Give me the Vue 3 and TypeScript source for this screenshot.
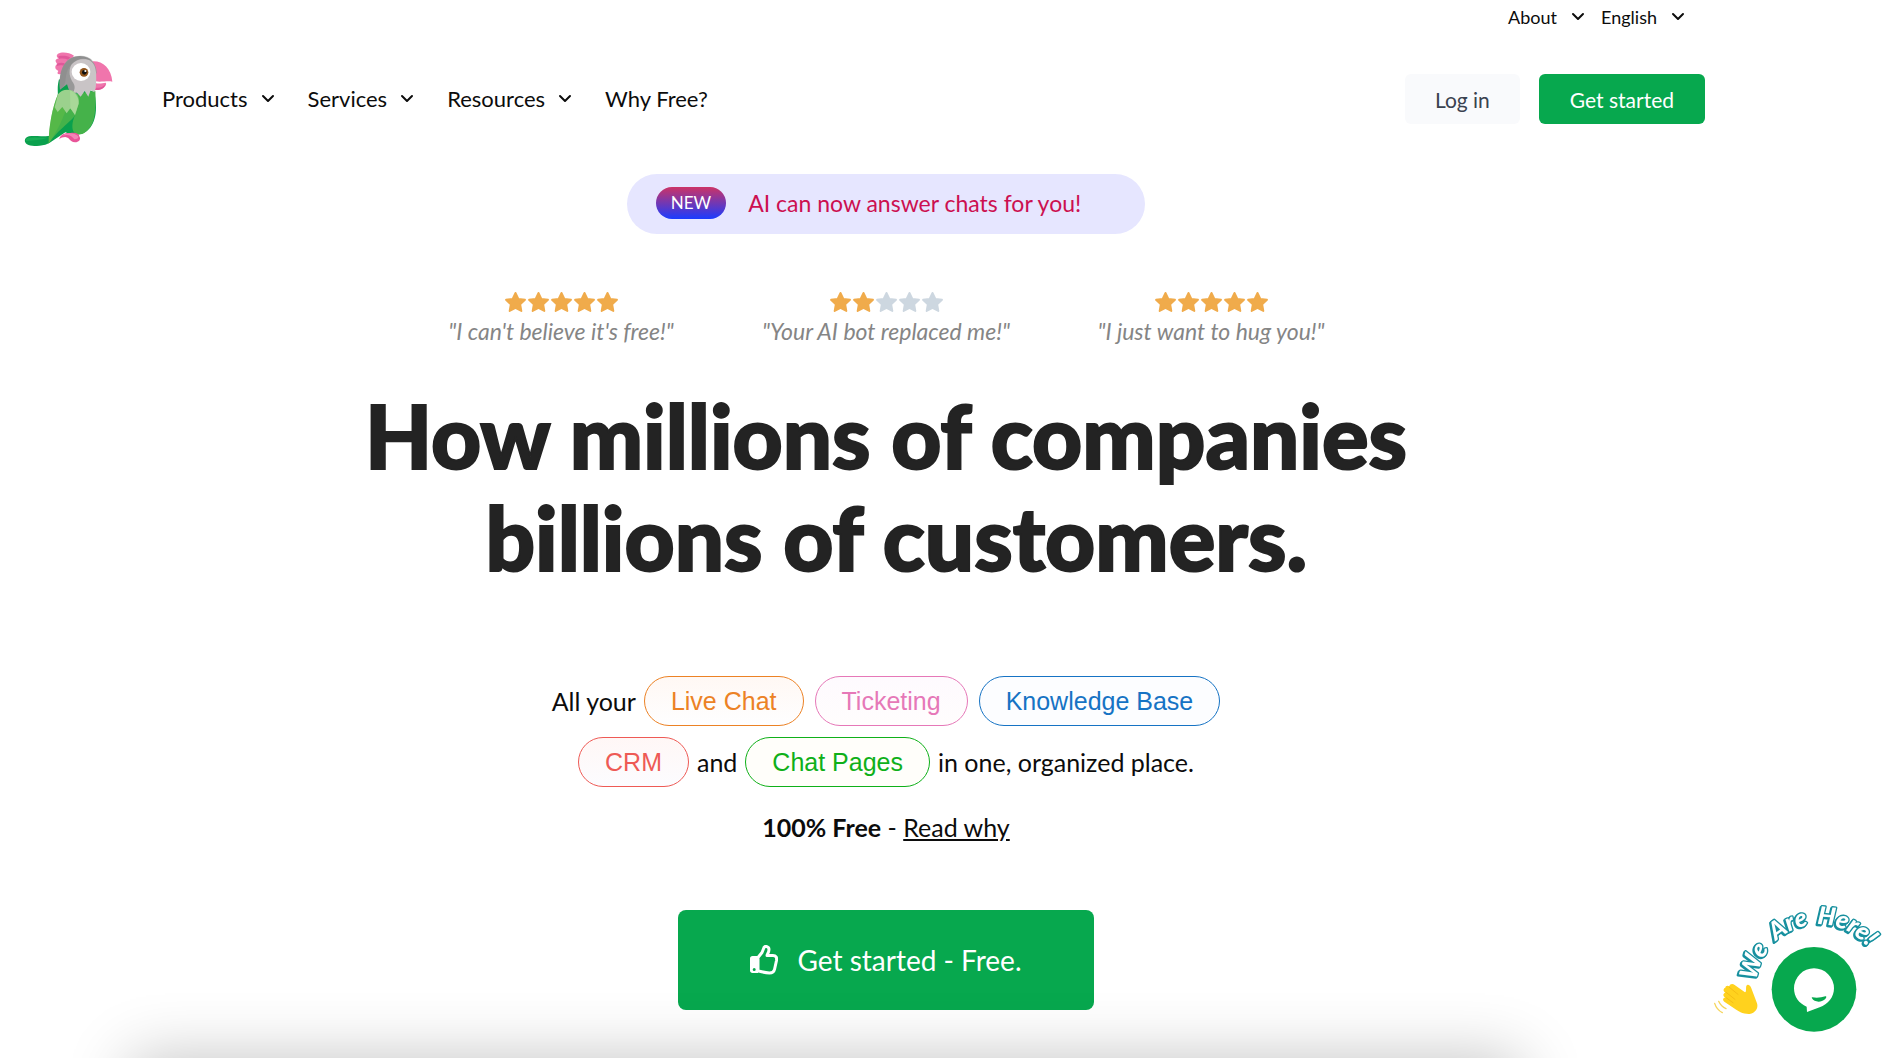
<script setup lang="ts">
const menus: string[] = ['Products', 'Services', 'Resources']
const utilities: string[] = ['About', 'English']

interface Review {
  stars: number
  quote: string
}
const reviews: Review[] = [
  { stars: 5, quote: '"I can\'t believe it\'s free!"' },
  { stars: 2, quote: '"Your AI bot replaced me!"' },
  { stars: 5, quote: '"I just want to hug you!"' },
]
</script>

<template>
  <div class="page">
    <div class="topbar">
      <button v-for="item in utilities" :key="item" type="button" class="menu small">
        {{ item }}
        <svg class="chevron" viewBox="0 0 14 10" aria-hidden="true"><path d="M2 2l5 5 5-5" /></svg>
      </button>
    </div>

    <header class="header">
      <a href="#" class="logo" aria-label="Home">
        <svg viewBox="72 60 270 288" aria-hidden="true">
          <path fill="#f075ac" d="M222 74C208 64 186 62 174 68c-7 5-3 13 4 14-10 1-14 6-9 13 2 4 6 5 6 5-9 1-11 8-7 15l7 5c-6 8 0 13 9 8z" />
          <path fill="#e0589a" d="M175 76c15-3 28-1 36 4l-7 6c-9-4-19-4-27-2zM170 98c10-4 20-4 26 0l-6 6c-7-2-14-1-19 1z" />
          <path fill="#f075ac" d="M277 91c30-2 57 20 60 61-12-4-32 2-50-1zM286 156c12 4 22 0 31-1 6 4-6 24-32 22z" />
          <path fill="#e0589a" d="M289 170c12 2 22-4 27-11-2 11-12 20-31 18z" />
          <path fill="#0aa04d" d="M177 145c-5 18-4 36-3 50l-22 119c-26 3-50 0-65 2-15 4-16 17-6 24 12 8 34 5 55 1l12-5 48-32c52 22 92-9 92-75 0-30-6-47-6-47z" />
          <path fill="#45b24a" d="M222 190l64-11c3 68-2 110-37 129-35 12-38-24-24-55z" />
          <path fill="#989898" d="M180 176c-6-63 17-101 60-101 33 1 49 23 50 51l-55 60-24 4-10-30z" />
          <path fill="#c9c4c6" d="M215 100c20-25 70-25 73 24 2 31-1 48-5 60l-11-6-7 19-11-17-12 17-14-15-10 13c4-22 12-25-2-45-10-17-9-36-1-50z" />
          <path fill="#858585" d="M205 88c20-17 54-20 74 1-25-7-49-7-67 14-23 29-8 48-24 66l-8 5c-3-43 5-69 25-86z" opacity=".45" />
          <ellipse cx="243" cy="123" rx="28" ry="27" fill="#fff" />
          <circle cx="252" cy="124" r="13" fill="#91551d" />
          <circle cx="253" cy="124" r="7" fill="#111" />
          <circle cx="256" cy="120" r="3" fill="#fff" />
          <path fill="#45b24a" d="M174 190c26-27 69-9 63 35-5 42-54 57-91 113 0-48 11-111 28-148z" />
          <path fill="#65bd45" d="M211 178c-8 63-33 112-65 160 0-48 11-111 28-148 9-9 22-14 37-12z" opacity=".5" />
          <path fill="#9bd18d" d="M174 190c24-29 64-9 62 28l-11 34-14-20-11 15-13-19-14 15-9-14z" />
          <path fill="#b7dfa6" d="M210 177c20 2 30 22 26 41l-11 34-14-20z" opacity=".45" />
          <path fill="#e85498" d="M177 325c5-15 17-21 34-19 15-3 26 1 27 10 7 12-5 19-13 18-18-2-14-14-29-16-8 0-13 2-19 7z" />
          <path fill="#f384b7" d="M187 314c14-11 37-8 48 2 1 7-4 9-12 9-6-11-20-17-36-11z" />
          <path fill="#19ae57" d="M82 321c22-4 42 0 61-1-19 7-42 8-62 10-5 0-5-6 1-9z" />
        </svg>
      </a>
      <nav class="nav" aria-label="Main">
        <button v-for="item in menus" :key="item" type="button" class="menu">
          {{ item }}
          <svg class="chevron" viewBox="0 0 14 10" aria-hidden="true"><path d="M2 2l5 5 5-5" /></svg>
        </button>
        <a href="#" class="menu">Why Free?</a>
      </nav>
      <div class="actions">
        <button type="button" class="login">Log in</button>
        <button type="button" class="signup">Get started</button>
      </div>
    </header>

    <main class="hero">
      <a href="#" class="banner">
        <span class="badge">NEW</span>
        <span>AI can now answer chats for you!</span>
      </a>

      <div class="reviews">
        <figure v-for="review in reviews" :key="review.quote" class="review">
          <div class="stars" role="img" :aria-label="review.stars + ' out of 5 stars'">
            <svg v-for="n in 5" :key="n" viewBox="0 0 24 24" :class="{ off: n > review.stars }" aria-hidden="true">
              <path d="M12 2l3 6.200 6.900 1-5 4.800 1.200 6.900L12 17.600l-6.100 3.300 1.200-6.900-5-4.800 6.900-1z" />
            </svg>
          </div>
          <figcaption>{{ review.quote }}</figcaption>
        </figure>
      </div>

      <h1>How millions of companies<br />&nbsp;billions of customers.</h1>

      <div class="products">
        <div class="line">
          <span>All your</span>
          <a href="#" class="pill chat">Live Chat</a>
          <a href="#" class="pill ticketing">Ticketing</a>
          <a href="#" class="pill knowledge">Knowledge Base</a>
        </div>
        <div class="line">
          <a href="#" class="pill crm">CRM</a>
          <span>and</span>
          <a href="#" class="pill pages">Chat Pages</a>
          <span>in one, organized place.</span>
        </div>
      </div>

      <p class="free"><strong>100% Free</strong> - <a href="#">Read why</a></p>

      <button type="button" class="cta">
        <svg viewBox="0 0 28 30" aria-hidden="true">
          <path class="outline" d="M8 12.500l4-5 2-5c1-2 5-1 5 2 0 3-2 5-2 6h6c3 0 4 2 3.500 5l-2 9c-.6 2.500-2 3.500-5 3.500-5 0-8-1.500-11.500-2z" />
          <path fill-rule="evenodd" d="M2.500 11H8v17H2.500C1 28 0 27 0 25.500v-12C0 12 1 11 2.500 11zM4.200 23a1.500 1.500 0 100 3 1.500 1.500 0 000-3z" />
        </svg>
        Get started - Free.
      </button>
    </main>

    <div class="preview" aria-hidden="true"></div>

    <button type="button" class="widget" aria-label="Open chat">
      <svg viewBox="0 0 564 504">
        <defs>
          <path id="greeting-arc" d="M170 272A188 188 0 0 1 545 287" />
        </defs>
        <g class="greeting">
          <text><textPath href="#greeting-arc">We</textPath></text>
          <text><textPath href="#greeting-arc" startOffset="134">Are</textPath></text>
          <text><textPath href="#greeting-arc" startOffset="270">Here!</textPath></text>
        </g>
        <circle cx="342" cy="298" r="127" fill="#07a84e" />
        <path fill="#fff" d="M342 235a60 60 0 0 1 60 60c0 27-18 48-43 57l-38 14-1-16c-23-9-38-30-38-55a60 60 0 0 1 60-60z" />
        <path fill="#07a84e" d="M337 322c13 2 27 1 39-3 5 0 3 5-1 9-13 11-33 8-39-3-1-2-1-3 1-3z" />
        <path fill="#ffd21e" d="M88 289c2-9 11-9 16-4l31 22c5-1 2-13 4-19 3-7 12-3 15 7l17 45c5 15-6 30-22 32-19 1-35-8-47-17l-29-20c-7-6-3-13 4-12-9-4-9-13-1-15-8-5-6-13 0-15 0-6 7-8 12-4z" />
        <path fill="none" stroke="#eeb310" stroke-width="2" d="M87 291l28 23M77 306l29 23M77 322l23 17" />
        <path fill="none" stroke="#f5d55c" stroke-width="4" stroke-linecap="round" d="M44 340c4 13 12 22 23 28M56 334c5 11 12 18 22 22" />
      </svg>
    </button>
  </div>
</template>

<style>
body {
  margin: 0;
  background: #fff;
}
</style>

<style scoped>
.page {
  position: relative;
  box-sizing: border-box;
  min-height: 100vh;
  overflow: hidden;
  padding-right: 116px;
  background: #fff;
  color: #0c0c0c;
  font-family: Lato, sans-serif;
}

button {
  border: 0;
  margin: 0;
  padding: 0;
  background: none;
  color: inherit;
  font: inherit;
  cursor: pointer;
}

a {
  color: inherit;
  text-decoration: none;
}

.topbar {
  display: flex;
  justify-content: flex-end;
  gap: 16px;
  height: 33px;
  padding-right: 87px;
}

.menu {
  display: flex;
  align-items: center;
  gap: 13px;
  font-size: 22px;
  line-height: 28px;
  white-space: nowrap;
}

.menu.small {
  gap: 14px;
  font-size: 18px;
}

.chevron {
  width: 14px;
  height: 10px;
  fill: none;
  stroke: currentColor;
  stroke-width: 2;
  stroke-linecap: round;
  stroke-linejoin: round;
}

.header {
  display: flex;
  align-items: center;
  padding: 18px 67px 0 24px;
}

.logo svg {
  display: block;
  width: 90px;
  height: 96px;
}

.nav {
  display: flex;
  gap: 33px;
  margin-left: 48px;
}

.actions {
  display: flex;
  gap: 19px;
  margin-left: auto;
}

.login,
.signup {
  height: 50px;
  padding: 0 30px;
  border-radius: 6px;
  font-size: 21px;
}

.login {
  background: #f9fafc;
  color: #3a4250;
}

.signup {
  padding: 0 31px;
  background: #07a84e;
  color: #fff;
}

.hero {
  display: flex;
  flex-direction: column;
  align-items: center;
}

.banner {
  display: flex;
  align-items: center;
  gap: 22px;
  box-sizing: border-box;
  height: 60px;
  margin-top: 27px;
  padding: 0 64px 2px 29px;
  border-radius: 30px;
  background: #e6e6ff;
  color: #cc1050;
  font-size: 23px;
}

.badge {
  padding: 0 15px;
  border-radius: 16px;
  background: linear-gradient(#cc3366, #1a3cff);
  color: #fff;
  font-size: 17px;
  line-height: 32px;
}

.reviews {
  display: flex;
  margin-top: 56px;
}

.review {
  display: flex;
  flex-direction: column;
  align-items: center;
  width: 325px;
  margin: 0;
  color: #858585;
  font-size: 23px;
  font-style: italic;
  line-height: 32px;
}

.stars {
  display: flex;
}

.stars svg {
  width: 23px;
  height: 25px;
  fill: #f0ab4b;
  stroke: #f0ab4b;
  stroke-width: 2;
  stroke-linejoin: round;
}

.stars svg.off {
  fill: #cdd7e0;
  stroke: #cdd7e0;
}

h1 {
  margin: 38px 0 0;
  color: #232323;
  font-size: 87px;
  font-weight: 900;
  line-height: 102px;
  text-align: center;
  -webkit-text-stroke: 2px #232323;
}

.products {
  display: flex;
  flex-direction: column;
  gap: 11px;
  margin-top: 87px;
}

.line {
  display: flex;
  justify-content: center;
  align-items: center;
  gap: 8px;
  font-size: 25px;
}

.pill {
  box-sizing: border-box;
  height: 50px;
  padding: 0 26px;
  border: 1px solid currentColor;
  border-radius: 25px;
  font-family: "Liberation Sans", sans-serif;
  line-height: 48px;
}

.pill + .pill {
  margin-left: 3px;
}

.chat {
  background: linear-gradient(#fff8f4, #fefeff);
  color: #ec8225;
}

.ticketing {
  background: linear-gradient(#fefafe, #fffdfd);
  color: #e678b8;
}

.knowledge {
  background: #fcfdff;
  color: #1673c4;
}

.crm {
  background: linear-gradient(#fff7f6, #fcfcff);
  color: #ee5a55;
}

.pages {
  background: #fffefa;
  color: #0fb019;
}

.free {
  margin: 24px 0 0;
  font-size: 25px;
  line-height: 32px;
}

.free a {
  text-decoration: underline;
}

.cta {
  display: flex;
  justify-content: center;
  align-items: center;
  gap: 19px;
  width: 416px;
  height: 100px;
  margin-top: 67px;
  border-radius: 8px;
  background: #07a84e;
  color: #fff;
  font-size: 28px;
}

.cta svg {
  width: 28px;
  height: 30px;
  fill: #fff;
}

.cta .outline {
  fill: none;
  stroke: #fff;
  stroke-width: 3;
  stroke-linejoin: round;
}

/* Card that begins just under the fold; only its shadow reaches the hero */
.preview {
  position: absolute;
  top: 100%;
  left: 130px;
  right: 368px;
  height: 200px;
  box-shadow: 0 0 60px rgba(0, 0, 0, 0.24);
  pointer-events: none;
}

.widget {
  position: fixed;
  right: 0;
  bottom: 0;
}

.widget svg {
  display: block;
  width: 188px;
  height: 168px;
}

.greeting {
  fill: #fff;
  stroke: #17909f;
  stroke-width: 8;
  stroke-linejoin: round;
  paint-order: stroke;
  filter: drop-shadow(-3px 3px 0 #17909f);
  font-family: Lato, sans-serif;
  font-size: 74px;
  font-weight: 900;
  font-style: italic;
}
</style>
